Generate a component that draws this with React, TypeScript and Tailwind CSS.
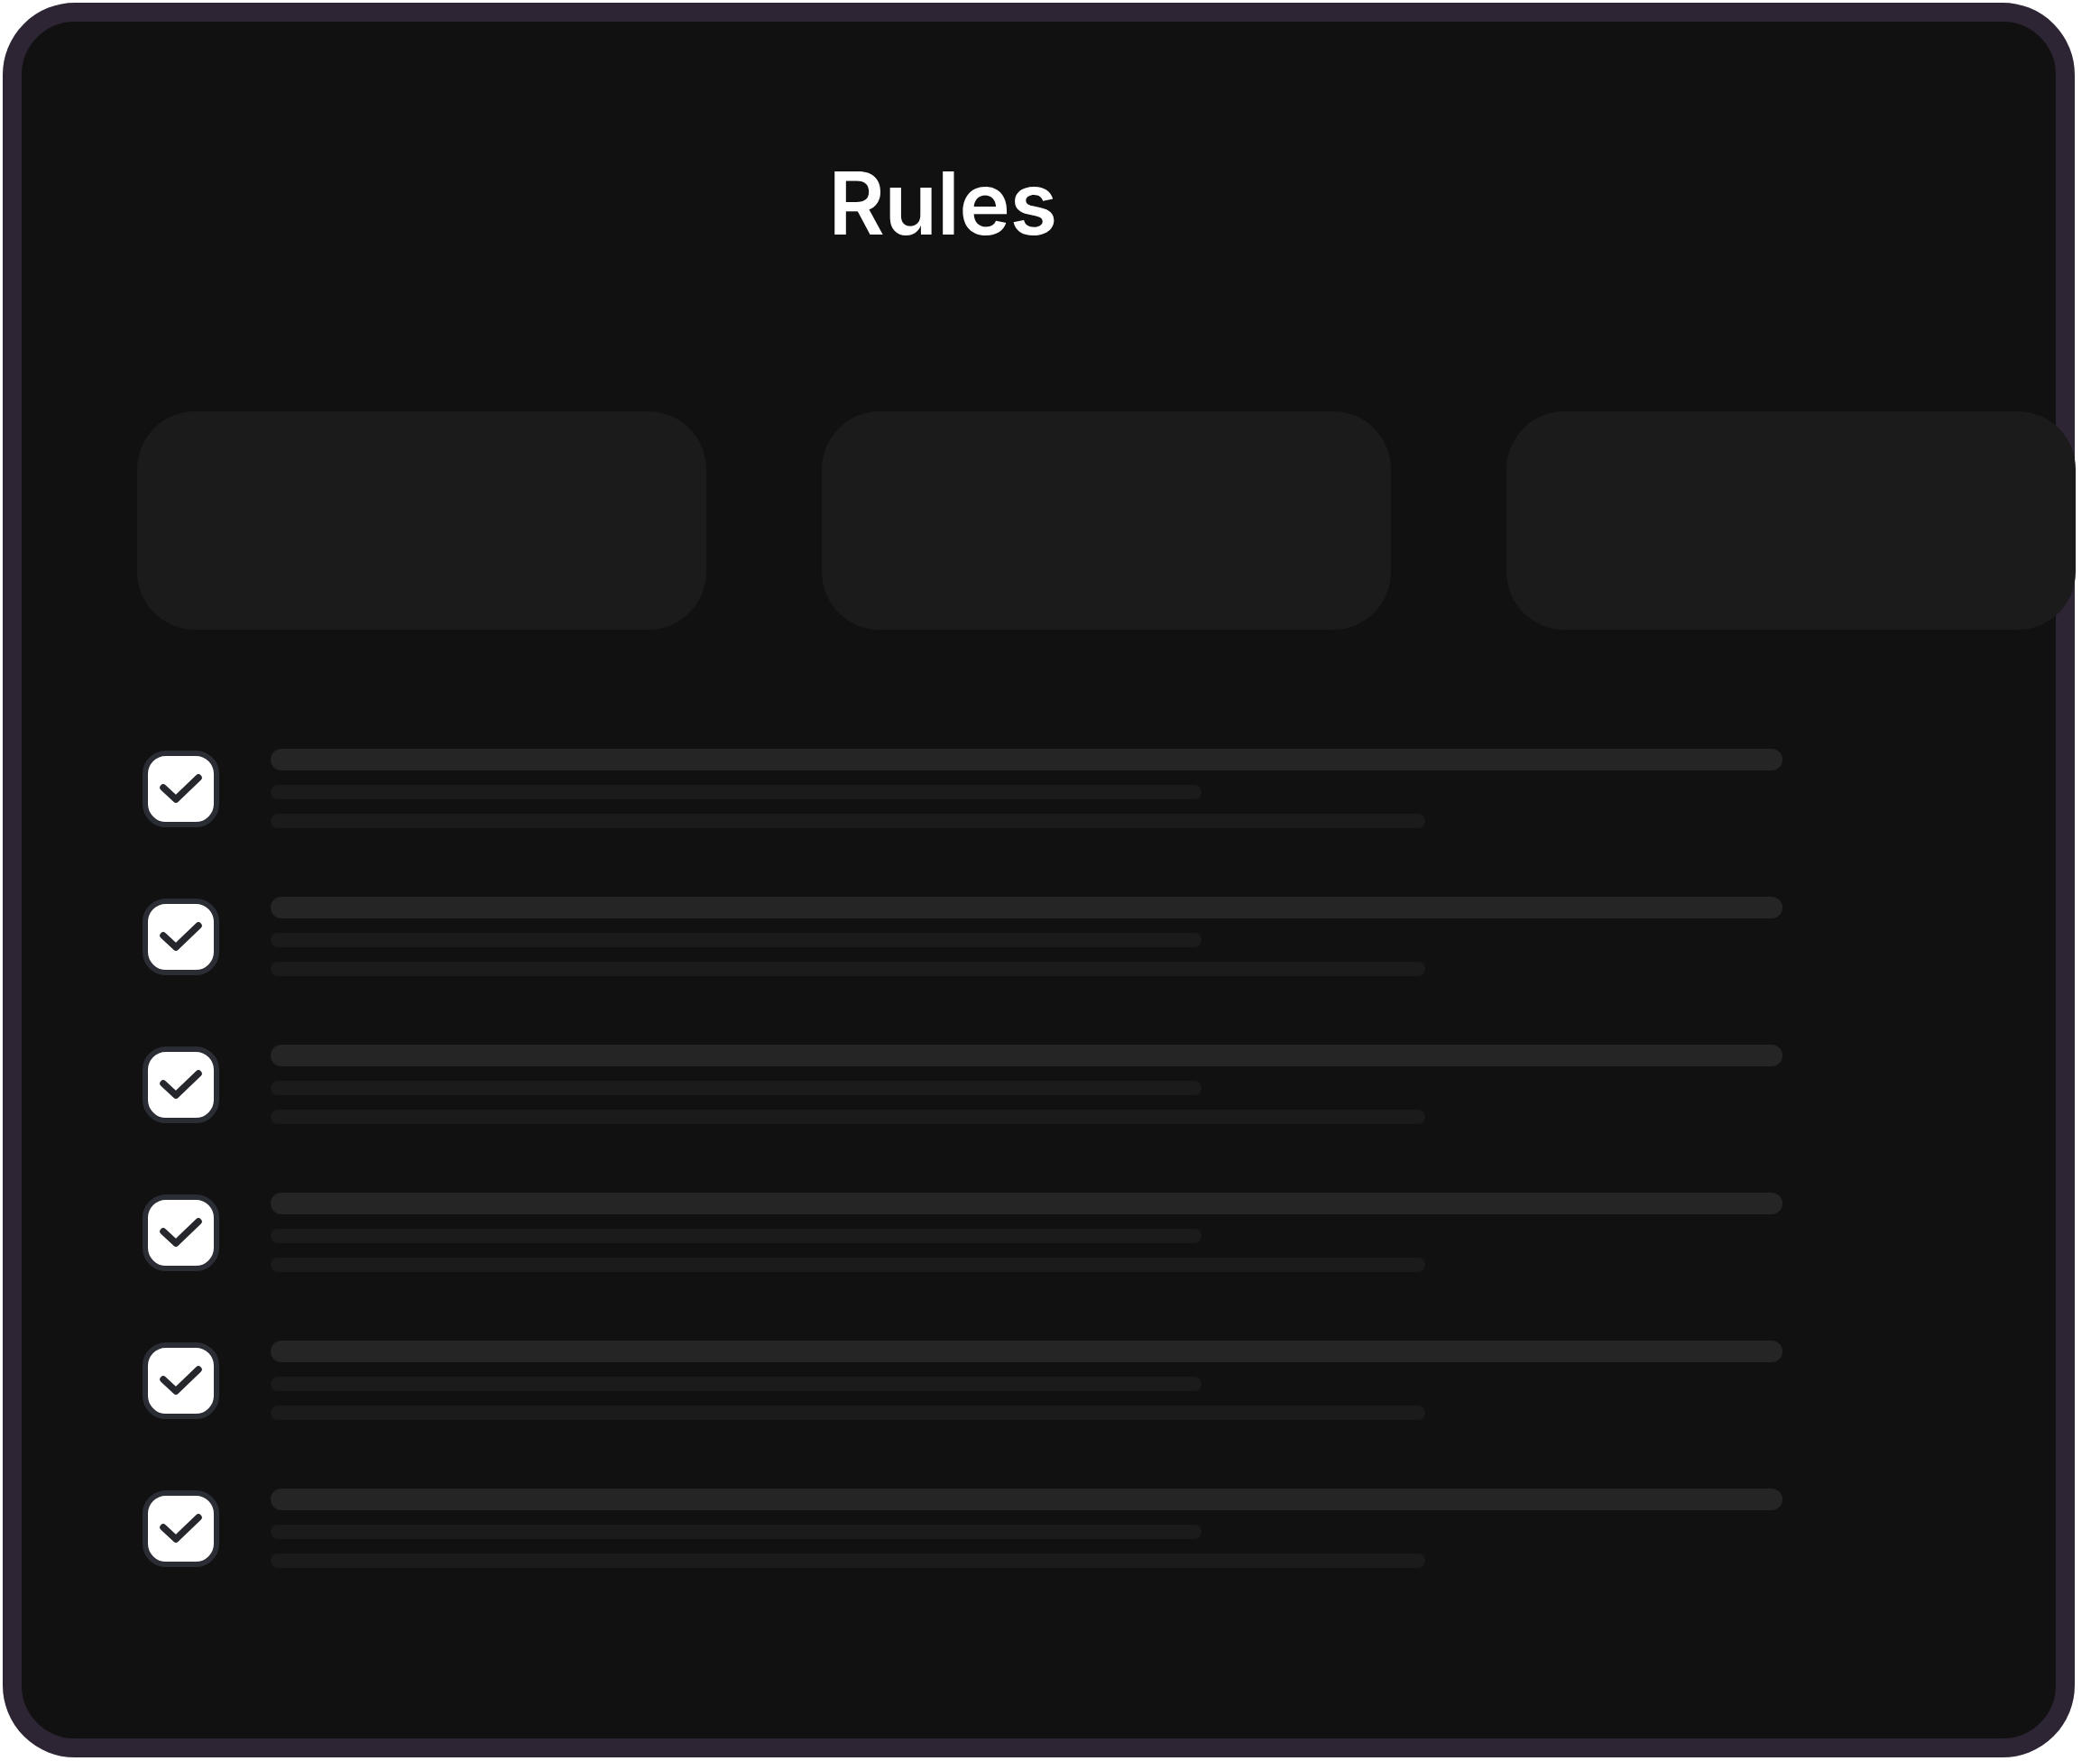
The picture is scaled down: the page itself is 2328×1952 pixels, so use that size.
import React from 'react';

const rows = [0, 1, 2, 3, 4, 5];

function CheckBox() {
  return (
    <div className="flex h-[85px] w-[85px] items-center justify-center rounded-[26px] border-[6px] border-[#2a2d34] bg-white">
      <svg width="73" height="73" viewBox="0 0 73 73" fill="none">
        <path
          d="M17 35 L31 48 L56 24"
          stroke="#25272d"
          strokeWidth="7.5"
          strokeLinecap="round"
          strokeLinejoin="round"
        />
      </svg>
    </div>
  );
}

export default function App() {
  return (
    <div className="min-h-screen bg-white" style={{ fontFamily: 'Inter, "Noto Sans", sans-serif' }}>
      <div className="ml-[3px] pt-[3px]">
        <div className="h-[1945px] w-[2297px] rounded-[80px] border-[21px] border-[#2d2434] bg-[#111111] pl-[128px] pt-[153px]">
          <h1 className="w-[1786px] text-center text-[96px] font-semibold leading-none tracking-[-0.5px] text-white">
            Rules
          </h1>

          <div className="mt-[183px] flex gap-[128px]">
            <div className="h-[242px] w-[631px] shrink-0 rounded-[64px] bg-[#1b1b1b]" />
            <div className="h-[242px] w-[631px] shrink-0 rounded-[64px] bg-[#1b1b1b]" />
            <div className="h-[242px] w-[631px] shrink-0 rounded-[64px] bg-[#1b1b1b]" />
          </div>

          <div className="mt-[132px] flex flex-col gap-[76px]">
            {rows.map((r) => (
              <div key={r} className="flex items-center">
                <div className="flex w-[96px] justify-center">
                  <CheckBox />
                </div>
                <div className="ml-[52px] flex flex-col gap-[16px]">
                  <div className="h-[24px] w-[1676px] rounded-full bg-[#252525]" />
                  <div className="h-[16px] w-[1032px] rounded-full bg-[#1b1b1b]" />
                  <div className="h-[16px] w-[1280px] rounded-full bg-[#1b1b1b]" />
                </div>
              </div>
            ))}
          </div>
        </div>
      </div>
    </div>
  );
}
